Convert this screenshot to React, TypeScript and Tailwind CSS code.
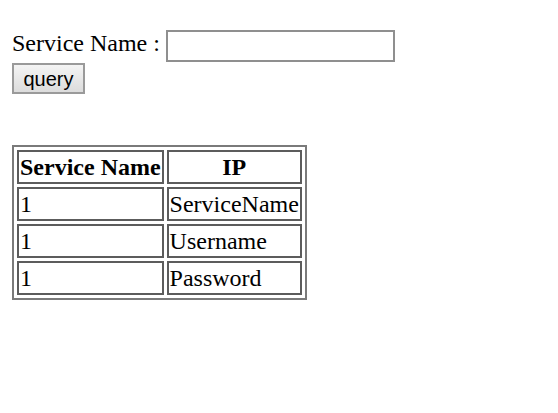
const rows = [
  { name: '1', ip: 'ServiceName' },
  { name: '1', ip: 'Username' },
  { name: '1', ip: 'Password' }
]

export default function App(): React.ReactElement {
  return (
    <div className="min-h-[413px] bg-white p-[12px] font-['Liberation_Serif',serif] text-[24px] text-black">
      <div className="flex items-start pt-[18px]">
        <span className="leading-[27px] whitespace-nowrap">Service Name :</span>
        <input
          type="text"
          className="ml-[6px] h-[32px] w-[229px] border-2 border-[#8f8f8f] bg-white outline-none"
        />
      </div>
      <button className="mt-[1px] flex h-[31px] w-[73px] items-center justify-center border-2 border-[#9a9a9a] bg-gradient-to-b from-[#f4f4f4] to-[#dcdcdc] font-['Liberation_Sans',sans-serif] text-[20px] leading-none text-black">
        query
      </button>

      <table className="mt-[51px] border-separate border-spacing-[3px] border-2 border-[#7a7a7a]">
        <thead>
          <tr>
            <th className="border-2 border-[#5c5c5c] px-[1px] py-[2px] text-center font-bold leading-[26px] whitespace-nowrap">
              Service Name
            </th>
            <th className="border-2 border-[#5c5c5c] px-[1px] py-[2px] text-center font-bold leading-[26px] whitespace-nowrap">
              IP
            </th>
          </tr>
        </thead>
        <tbody>
          {rows.map((r) => (
            <tr key={r.ip}>
              <td className="border-2 border-[#5c5c5c] px-[1px] py-[2px] text-left leading-[26px]">
                {r.name}
              </td>
              <td className="border-2 border-[#5c5c5c] px-[1px] py-[2px] text-left leading-[26px] whitespace-nowrap">
                {r.ip}
              </td>
            </tr>
          ))}
        </tbody>
      </table>
    </div>
  )
}
